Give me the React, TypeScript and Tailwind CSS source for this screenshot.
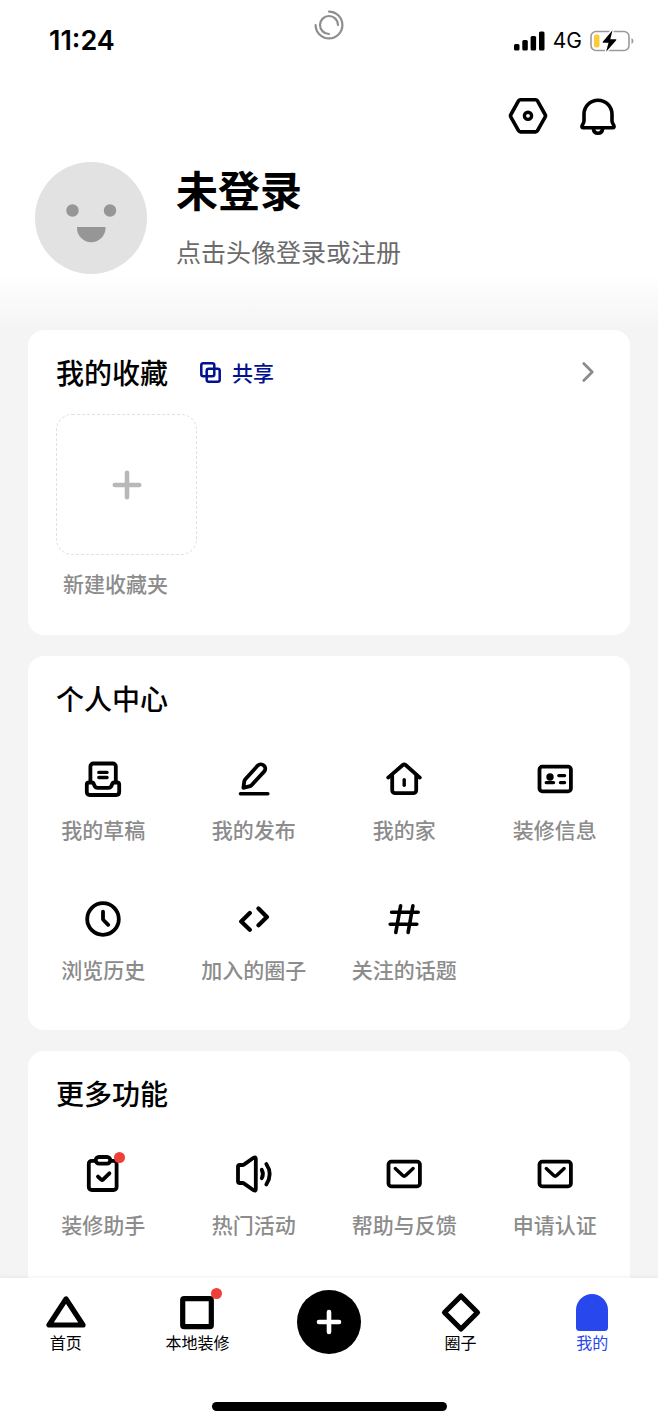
import type { ReactNode } from 'react';

interface Entry {
  label: string;
  icon: ReactNode;
  badge?: boolean;
}

interface LineIconProps {
  children: ReactNode;
  width?: number;
}

function LineIcon({ children, width = 3.8 }: LineIconProps) {
  return (
    <svg
      viewBox="0 0 36 36"
      className="w-9 h-9 overflow-visible"
      fill="none"
      stroke="currentColor"
      strokeWidth={width}
      strokeLinecap="round"
      strokeLinejoin="round"
      aria-hidden="true"
    >
      {children}
    </svg>
  );
}

const mailIcon = (
  <LineIcon>
    <rect x="2.5" y="5.7" width="31.4" height="24.6" rx="2.8" />
    <path d="M9.3 12.5l7.2 6.8q1.7 1.6 3.4 0l7.2-6.8" strokeWidth="3.4" />
  </LineIcon>
);

const personalEntries: Entry[] = [
  {
    label: '我的草稿',
    icon: (
      <LineIcon>
        <path d="M5.4 21V5.5a3 3 0 0 1 3-3h19.4a3 3 0 0 1 3 3V21" />
        <path d="M13.8 11.4h8.2M13.8 16.5h8.2" strokeWidth="3.4" />
        <path d="M4 21.5h2.5q2 0 2.5 2 .8 3.3 3.8 3.3h10.4q3 0 3.8-3.3.5-2 2.5-2H32q2.2 0 2.2 2.2V31q0 3-3 3H4.8q-3 0-3-3v-7.3q0-2.2 2.2-2.2z" />
      </LineIcon>
    ),
  },
  {
    label: '我的发布',
    icon: (
      <LineIcon>
        <path d="M7.4 26.8l.9-6.6a3 3 0 0 1 .8-1.6L21.7 4.6a4.4 4.4 0 0 1 6.6 5.8L15.5 24.2a3 3 0 0 1-1.5.9z" />
        <path d="M4.4 32.7h27.5" strokeWidth="3.4" />
      </LineIcon>
    ),
  },
  {
    label: '我的家',
    icon: (
      <LineIcon>
        <path d="M2.2 16.6L16.8 4a2.2 2.2 0 0 1 2.8 0l14.2 12.6" />
        <path d="M6.2 14v15.2a3 3 0 0 0 3 3h18a3 3 0 0 0 3-3V14" />
        <path d="M18.2 18.8v5.4" strokeWidth="3.4" />
      </LineIcon>
    ),
  },
  {
    label: '装修信息',
    icon: (
      <LineIcon>
        <rect x="2.5" y="5.7" width="31.4" height="24.6" rx="2.8" />
        <circle cx="13" cy="16" r="3.7" fill="currentColor" stroke="none" />
        <path d="M9.2 21.6h7.4M21.8 14.6h5.8M23.4 21.6h4.2" strokeWidth="3.3" />
      </LineIcon>
    ),
  },
  {
    label: '浏览历史',
    icon: (
      <LineIcon>
        <circle cx="18" cy="18" r="15.8" />
        <path d="M18 10.6v7.4q0 .6.4 1l4.8 4.8" />
      </LineIcon>
    ),
  },
  {
    label: '加入的圈子',
    icon: (
      <LineIcon width={4.2}>
        <path d="M13.8 12l-8.6 8.5 8.6 8.3M22.5 7.5l8.4 8.5-8.4 8.3" />
      </LineIcon>
    ),
  },
  {
    label: '关注的话题',
    icon: (
      <LineIcon width={3.6}>
        <path d="M5.6 11.3h26.6M4.2 23.3h26.6M14.6 4.8L9.8 31.4M26.9 4.8l-4.8 26.6" />
      </LineIcon>
    ),
  },
];

const moreEntries: Entry[] = [
  {
    label: '装修助手',
    badge: true,
    icon: (
      <LineIcon>
        <path d="M10.5 4.8H6.8a3 3 0 0 0-3 3V31a3 3 0 0 0 3 3h21.8a3 3 0 0 0 3-3V7.8a3 3 0 0 0-3-3h-3.2" />
        <rect x="10.7" y="1" width="14.6" height="6.6" rx="3.3" />
        <path d="M13 20.6l3.2 3.1q.9.8 1.8 0l6.4-6.4" />
      </LineIcon>
    ),
  },
  {
    label: '热门活动',
    icon: (
      <LineIcon>
        <path d="M3.8 9h2.6q1 0 1.8-.6L17.6 1.8q2.2-1.3 2.2 1.2v30q0 2.5-2.2 1.2L8.2 27.6q-.8-.6-1.8-.6H3.8Q2 27 2 25.2V10.8Q2 9 3.8 9z" />
        <path d="M25.8 13.8q2.2 4.2 0 8.4M30.3 8q6.8 10 0 20.5" />
      </LineIcon>
    ),
  },
  { label: '帮助与反馈', icon: mailIcon },
  { label: '申请认证', icon: mailIcon },
];

function EntryGrid({ entries }: { entries: Entry[] }) {
  return (
    <div className="grid grid-cols-4 gap-y-[58px] mt-[45px]">
      {entries.map(entry => (
        <button key={entry.label} type="button" className="flex flex-col items-center gap-[18px]">
          <span className="relative text-black">
            {entry.icon}
            {entry.badge && (
              <span className="absolute -top-1 -right-1 w-[11px] h-[11px] rounded-full bg-[#ee3f38]" />
            )}
          </span>
          <span className="text-[21px] leading-7 font-medium text-[#8c8c8c] whitespace-nowrap">
            {entry.label}
          </span>
        </button>
      ))}
    </div>
  );
}

function StatusBar() {
  return (
    <div className="grid grid-cols-[1fr_auto_1fr] h-20 pt-0.5">
      <span className="self-center pl-[49px] text-[27px] leading-8 font-semibold font-[Inter,sans-serif]">
        11:24
      </span>

      {/* Activity spinner */}
      <svg
        viewBox="0 0 30 30"
        className="w-[30px] h-[30px] mt-2"
        fill="none"
        stroke="#8e8e8e"
        strokeWidth="2.2"
        strokeLinecap="round"
        aria-hidden="true"
      >
        <path d="M15 1.600A13.4 13.4 0 1 1 1.6 15" />
        <path d="M24 15A9 9 0 1 0 15 24" />
      </svg>

      <div className="flex items-center justify-end gap-2 pr-6">
        <svg viewBox="0 0 31 20" className="w-[31px] h-5" aria-hidden="true">
          <rect x="0" y="13" width="5.5" height="6.5" rx="1.5" />
          <rect x="8.3" y="9" width="5.5" height="10.5" rx="1.5" />
          <rect x="16.6" y="5" width="5.5" height="14.5" rx="1.5" />
          <rect x="25" y="0.5" width="5.5" height="19" rx="1.5" />
        </svg>
        <span className="text-[21px] leading-7 font-[Inter,sans-serif]">4G</span>
        <svg viewBox="0 0 44 22" className="w-11 h-[22px]" aria-hidden="true">
          <rect x="1" y="1.5" width="38" height="19" rx="5" fill="none" stroke="#9a9a9a" strokeWidth="1.6" />
          <path d="M41.5 8v6q2-.8 2-3t-2-3z" fill="#9a9a9a" />
          <rect x="4" y="4.5" width="5.5" height="13" rx="2" fill="#fbcb3a" />
          <path
            d="M22.5 .2L12.8 11.8q-.6 1 .5 1h5.2l-2.4 9L26.2 10.2q.6-1-.5-1h-5.4z"
            fill="#000"
            stroke="#fff"
            strokeWidth="3"
            paintOrder="stroke"
          />
        </svg>
      </div>
    </div>
  );
}

function Header() {
  return (
    <header className="bg-white">
      <StatusBar />

      {/* Settings and messages */}
      <div className="flex justify-end gap-[30px] mt-4 pr-10">
        <button type="button" aria-label="设置">
          <svg
            viewBox="0 0 40 40"
            className="w-10 h-10"
            fill="none"
            stroke="#000"
            strokeWidth="3.6"
            strokeLinejoin="round"
          >
            <path d="M12.500 3.700h15q1.300 0 2 1.200l7.600 13.600q.8 1.300 0 2.600l-7.600 13.600q-.7 1.200-2 1.200h-15q-1.300 0-2-1.200L2.900 21.100q-.8-1.300 0-2.600l7.600-13.600q.7-1.200 2-1.200z" />
            <circle cx="20" cy="19.8" r="3.6" strokeWidth="3.4" />
          </svg>
        </button>
        <button type="button" aria-label="消息">
          <svg
            viewBox="0 0 40 40"
            className="w-10 h-10"
            fill="none"
            stroke="#000"
            strokeWidth="3.6"
            strokeLinejoin="round"
          >
            <path d="M20 4.200a14 14 0 0 1 14 14v6.600q0 1.400.8 2.700l1 1.900q1 2.300-1.200 2.300H5.400q-2.200 0-1.200-2.300l1-1.900q.8-1.300.8-2.700v-6.600a14 14 0 0 1 14-14z" />
            <path d="M15.300 32.500q.5 4.700 4.700 4.700t4.700-4.700" />
          </svg>
        </button>
      </div>

      {/* Profile */}
      <div className="flex gap-[29px] mt-[26px] pl-[35px]">
        <button type="button" aria-label="登录">
          <svg viewBox="0 0 112 112" className="w-28 h-28">
            <circle cx="56" cy="56" r="56" fill="#e2e2e2" />
            <circle cx="37.5" cy="48.5" r="6.2" fill="#969696" />
            <circle cx="75" cy="48.5" r="6.2" fill="#969696" />
            <path d="M42 65h28.500v1a14.200 14.200 0 0 1-28.500 0z" fill="#969696" />
          </svg>
        </button>
        <div>
          <h1 className="text-[42px] leading-[54px] font-bold">未登录</h1>
          <p className="mt-4 text-[25px] leading-[38px] text-[#6b6b6b]">点击头像登录或注册</p>
        </div>
      </div>

      <div className="h-14 bg-linear-to-b from-white to-[#f4f4f4]" />
    </header>
  );
}

function Favorites() {
  return (
    <section className="rounded-2xl bg-white pt-6 pb-[38px]">
      <div className="flex items-center pl-7 pr-8">
        <h2 className="text-[28px] leading-9 font-medium">我的收藏</h2>
        <button type="button" className="flex items-center gap-[11px] ml-8 text-[#00128f]">
          <svg
            viewBox="0 0 21 21"
            className="w-[21px] h-[21px]"
            fill="none"
            stroke="currentColor"
            strokeWidth="2.5"
            aria-hidden="true"
          >
            <rect x="1.3" y="1.3" width="13" height="13" rx="2" />
            <rect x="6.7" y="6.7" width="13" height="13" rx="2" />
          </svg>
          <span className="text-[21px] leading-7 font-medium">共享</span>
        </button>
        <button type="button" className="ml-auto" aria-label="查看全部收藏">
          <svg
            viewBox="0 0 20 24"
            className="w-5 h-6"
            fill="none"
            stroke="#8c8c8c"
            strokeWidth="2.8"
            strokeLinecap="round"
            strokeLinejoin="round"
          >
            <path d="M5.800 3.600l8.400 8.400-8.400 8.400" />
          </svg>
        </button>
      </div>

      <button type="button" className="block mt-6 ml-7 text-left">
        <span className="flex items-center justify-center w-[141px] h-[141px] rounded-2xl border border-dashed border-[#e0e0e0]">
          <svg
            viewBox="0 0 30 30"
            className="w-[30px] h-[30px]"
            stroke="#b8b8b8"
            strokeWidth="4.6"
            strokeLinecap="round"
            aria-hidden="true"
          >
            <path d="M15 2.800v24.400M2.800 15h24.400" />
          </svg>
        </span>
        <span className="block mt-3.5 px-[7px] text-[21px] leading-7 font-medium text-[#8c8c8c]">
          新建收藏夹
        </span>
      </button>
    </section>
  );
}

interface TabProps {
  label: string;
  icon: ReactNode;
  active?: boolean;
  badge?: boolean;
}

function Tab({ label, icon, active, badge }: TabProps) {
  return (
    <button
      type="button"
      className={`flex flex-col items-center ${active ? 'text-[#2848ee]' : 'text-black'}`}
      aria-current={active ? 'page' : undefined}
    >
      <span className="relative">
        <svg
          viewBox="0 0 44 44"
          className="w-11 h-11"
          fill="none"
          stroke="currentColor"
          strokeWidth="5.2"
          strokeLinejoin="round"
          aria-hidden="true"
        >
          {icon}
        </svg>
        {badge && (
          <span className="absolute -top-0.5 -right-[3px] w-[11px] h-[11px] rounded-full bg-[#ee3f38]" />
        )}
      </span>
      <span className="text-base leading-4">{label}</span>
    </button>
  );
}

function TabBar() {
  return (
    <nav className="sticky bottom-0 bg-white pt-3 pb-3.5 shadow-[0_-1px_4px_rgba(0,0,0,0.06)]">
      <div className="grid grid-cols-5 items-start">
        <Tab label="首页" icon={<path d="M22 9L5 35h34z" />} />
        <Tab label="本地装修" badge icon={<rect x="7.7" y="8.7" width="28.6" height="28" rx="1.5" />} />
        <button
          type="button"
          aria-label="发布"
          className="flex items-center justify-center justify-self-center w-16 h-16 rounded-full bg-black"
        >
          <svg viewBox="0 0 28 28" className="w-7 h-7" stroke="#fff" strokeWidth="4.6" strokeLinecap="round">
            <path d="M14 4v20M4 14h20" />
          </svg>
        </button>
        <Tab label="圈子" icon={<path d="M22 6l16.500 16.500L22 39 5.500 22.500z" />} />
        <Tab
          label="我的"
          active
          icon={
            <path
              d="M6 20a16 16 0 0 1 32 0v17.500a3.500 3.500 0 0 1-3.500 3.500h-25A3.500 3.500 0 0 1 6 37.500z"
              fill="currentColor"
              stroke="none"
            />
          }
        />
      </div>

      {/* Home indicator */}
      <div className="mx-auto mt-12 w-[235px] h-[9px] rounded-full bg-black" />
    </nav>
  );
}

export default function App() {
  return (
    <div className="flex flex-col min-h-screen bg-[#f4f4f4] text-black font-['Noto_Sans_CJK_SC',sans-serif]">
      <Header />

      <main className="flex flex-1 flex-col gap-[21px] px-7">
        <Favorites />

        <section className="rounded-2xl bg-white pt-6 pb-[47px]">
          <h2 className="pl-7 text-[28px] leading-9 font-medium">个人中心</h2>
          <EntryGrid entries={personalEntries} />
        </section>

        <section className="flex-1 rounded-t-2xl bg-white pt-6 pb-9">
          <h2 className="pl-7 text-[28px] leading-9 font-medium">更多功能</h2>
          <EntryGrid entries={moreEntries} />
        </section>
      </main>

      <TabBar />
    </div>
  );
}
